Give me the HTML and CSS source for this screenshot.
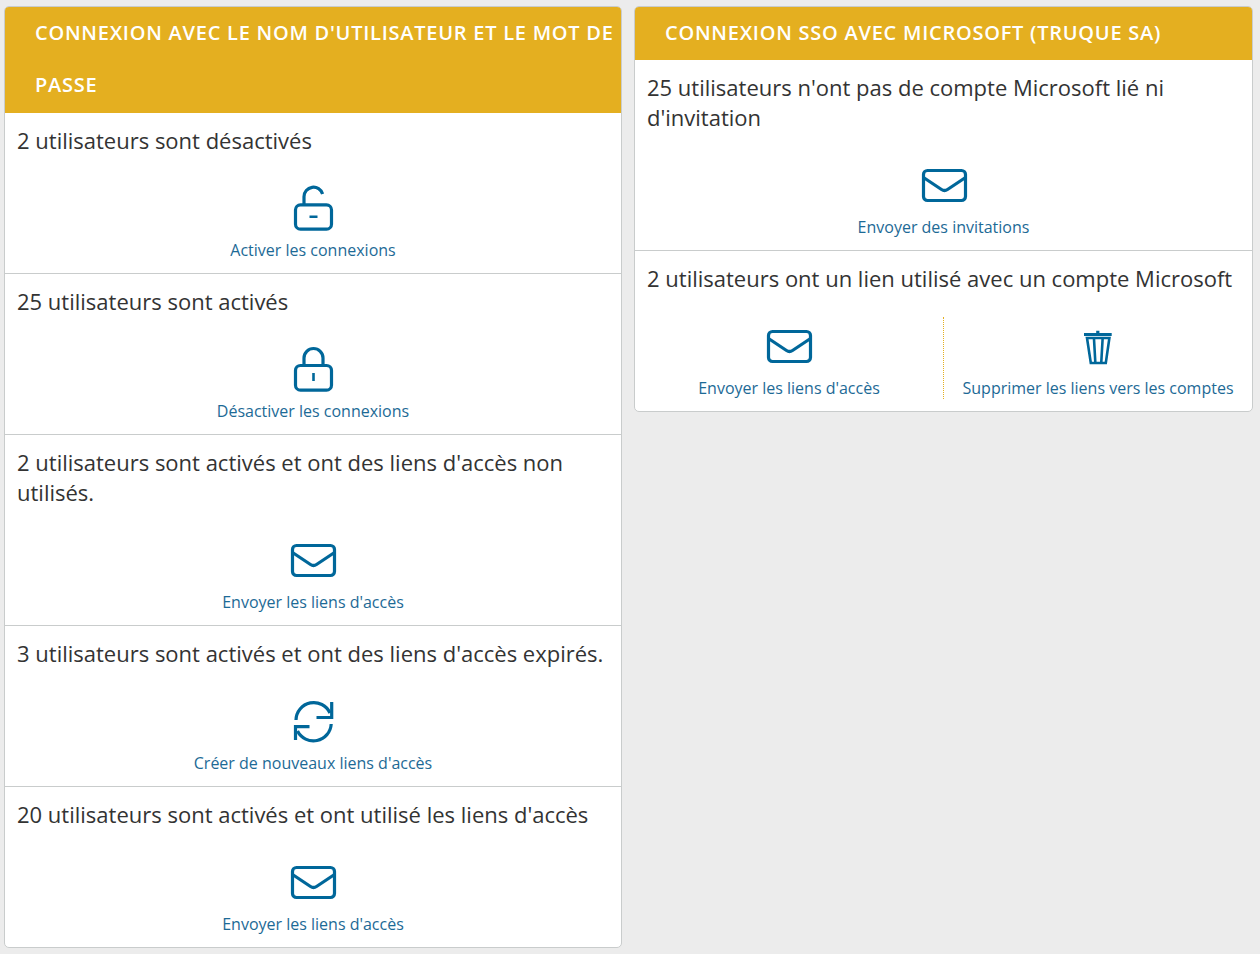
FILE: index.html
```html
<!DOCTYPE html>
<html lang="fr">
<head>
<meta charset="utf-8">
<title>Connexions</title>
<link rel="stylesheet" href="styles.css">
</head>
<body>
<svg class="sprite" aria-hidden="true">
  <symbol id="i-mail" viewBox="0 0 50 50">
    <rect x="4.5" y="9.5" width="42" height="30" rx="4"/>
    <path d="M4.5 16.5 L22.5 28.5 Q25.5 30.5 28.5 28.5 L46.5 16.5"/>
  </symbol>
  <symbol id="i-open" viewBox="0 0 50 50">
    <rect x="7.5" y="20.8" width="36" height="24.4" rx="5"/>
    <path d="M16 20 V12.8 a9.5 9.5 0 0 1 18.6 -2.8"/>
    <path class="thin" d="M21.5 32.7 H29.5"/>
  </symbol>
  <symbol id="i-lock" viewBox="0 0 50 50">
    <rect x="7.5" y="20.5" width="36" height="24.7" rx="5"/>
    <path d="M16 20 V13 a9.5 9.5 0 0 1 19 0 V20"/>
    <path class="thin" d="M25.5 28 V36"/>
  </symbol>
  <symbol id="i-refresh" viewBox="0 0 50 50">
    <path d="M8 23 A17.8 17.8 0 0 1 42 16"/>
    <path d="M43.7 5 V20.5 H28.5"/>
    <path d="M43.2 27 A17.8 17.8 0 0 1 9.5 34"/>
    <path d="M7.5 43 V29.7 H21.5"/>
  </symbol>
  <symbol id="i-trash" viewBox="0 0 50 50">
    <path d="M11 12.5 H38.7"/>
    <path d="M24.8 8.7 V12"/>
    <path class="thin" d="M14 16 L17.8 41 H32.8 L36.4 16 Z"/>
    <path class="thin" d="M21 17 L22.3 40 M29.6 17 L28.3 40"/>
  </symbol>
</svg>
<main class="board">
  <section class="card">
    <h2 class="card-title card-title-wrapped">Connexion avec le nom d'utilisateur et le mot de passe</h2>
    <div class="row">
      <p class="row-text">2 utilisateurs sont désactivés</p>
      <div class="actions">
        <a class="action"><svg class="icon"><use href="#i-open"/></svg><span class="label">Activer les connexions</span></a>
      </div>
    </div>
    <div class="row">
      <p class="row-text">25 utilisateurs sont activés</p>
      <div class="actions">
        <a class="action"><svg class="icon"><use href="#i-lock"/></svg><span class="label">Désactiver les connexions</span></a>
      </div>
    </div>
    <div class="row">
      <p class="row-text">2 utilisateurs sont activés et ont des liens d'accès non utilisés.</p>
      <div class="actions">
        <a class="action"><svg class="icon"><use href="#i-mail"/></svg><span class="label">Envoyer les liens d'accès</span></a>
      </div>
    </div>
    <div class="row">
      <p class="row-text">3 utilisateurs sont activés et ont des liens d'accès expirés.</p>
      <div class="actions">
        <a class="action"><svg class="icon"><use href="#i-refresh"/></svg><span class="label">Créer de nouveaux liens d'accès</span></a>
      </div>
    </div>
    <div class="row">
      <p class="row-text">20 utilisateurs sont activés et ont utilisé les liens d'accès</p>
      <div class="actions">
        <a class="action"><svg class="icon"><use href="#i-mail"/></svg><span class="label">Envoyer les liens d'accès</span></a>
      </div>
    </div>
  </section>
  <section class="card">
    <h2 class="card-title">Connexion SSO avec Microsoft (Truque SA)</h2>
    <div class="row">
      <p class="row-text">25 utilisateurs n'ont pas de compte Microsoft lié ni d'invitation</p>
      <div class="actions">
        <a class="action"><svg class="icon"><use href="#i-mail"/></svg><span class="label">Envoyer des invitations</span></a>
      </div>
    </div>
    <div class="row">
      <p class="row-text">2 utilisateurs ont un lien utilisé avec un compte Microsoft</p>
      <div class="actions">
        <a class="action"><svg class="icon"><use href="#i-mail"/></svg><span class="label">Envoyer les liens d'accès</span></a>
        <a class="action"><svg class="icon"><use href="#i-trash"/></svg><span class="label">Supprimer les liens vers les comptes</span></a>
      </div>
    </div>
  </section>
</main>
</body>
</html>
```
FILE: styles.css
```css
html, body {
  margin: 0;
  background: #ececec;
}
body {
  padding: 6px 7px 0 4px;
  font-family: "Open Sans", "Noto Sans", sans-serif;
  color: #333;
}
.sprite {
  display: none;
}
.board {
  display: grid;
  grid-template-columns: 618fr 619fr;
  gap: 12px;
  align-items: start;
}
.card {
  background: #fff;
  border: 1px solid #c9cccc;
  border-radius: 5px;
  overflow: hidden;
}
.card-title {
  margin: 0;
  padding: 0 4px 1px 30px;
  background: #e4af20;
  color: #fff;
  font-size: 20px;
  font-weight: 600;
  line-height: 52px;
  letter-spacing: 0.75px;
  text-transform: uppercase;
}
.card-title-wrapped {
  padding-bottom: 2px;
}
.row {
  padding: 12px 0 12px;
  border-bottom: 1px solid #c9cccc;
}
.row:last-child {
  border-bottom: 0;
}
.row-text {
  margin: 0 0 24px;
  padding: 0 12px;
  font-size: 22px;
  line-height: 30px;
}
.actions {
  display: flex;
}
.action {
  flex: 1 1 0;
  height: 82px;
  display: flex;
  flex-direction: column;
  align-items: center;
  color: #1d6a96;
}
.action + .action {
  border-left: 1px dotted #e4af20;
}
.icon {
  width: 50px;
  height: 50px;
  margin: 5px 0;
  fill: none;
  stroke: #00679a;
  stroke-width: 3.2;
}
.thin {
  stroke-width: 2.6;
}
.label {
  font-size: 16px;
  line-height: 22px;
}
```
